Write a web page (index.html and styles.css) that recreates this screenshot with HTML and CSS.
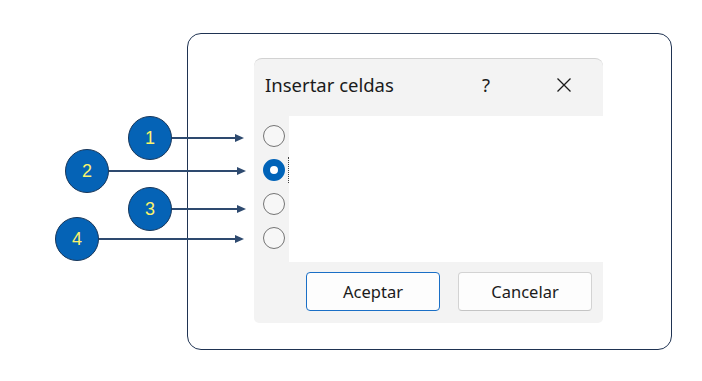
FILE: index.html
```html
<!DOCTYPE html>
<html lang="es">
<head>
	<meta charset="UTF-8">
	<title>Insertar celdas</title>
	<link rel="stylesheet" href="styles.css">
</head>
<body>
	<div class="stage">
		<div class="frame">
			<div class="dialog" role="dialog" aria-label="Insertar celdas">
				<div class="dialog-head">
					<span class="title">Insertar celdas</span>
					<span class="help">?</span>
					<svg class="close" viewBox="0 0 16 16" aria-hidden="true">
						<path d="M1.5 1.5 L14.5 14.5 M14.5 1.5 L1.5 14.5" />
					</svg>
				</div>
				<div class="dialog-body">
					<div class="options">
						<span class="radio"></span>
						<span class="radio checked"></span>
						<span class="radio"></span>
						<span class="radio"></span>
					</div>
					<div class="content">
						<span class="focus"></span>
					</div>
				</div>
				<div class="dialog-foot">
					<button class="btn primary">Aceptar</button>
					<button class="btn">Cancelar</button>
				</div>
			</div>
		</div>

		<!-- Annotation layer -->
		<svg class="arrows" viewBox="0 0 702 381" aria-hidden="true">
			<path d="M172 138 H236 M109 171 H238 M172 209 H238 M99 239 H236" />
			<polygon points="235,134 244,138 235,142" />
			<polygon points="237,167 246,171 237,175" />
			<polygon points="237,205 246,209 237,213" />
			<polygon points="235,235 244,239 235,243" />
		</svg>
		<span class="badge badge-1">1</span>
		<span class="badge badge-2">2</span>
		<span class="badge badge-3">3</span>
		<span class="badge badge-4">4</span>
	</div>
</body>
</html>
```

FILE: styles.css
```css
/* Base */
:root {
	--color-navy: #1f3352;
	--color-arrow: #2e4a6f;
	--color-dialog: #f3f3f3;
	--color-accent: #0063b8;
	--color-badge: #0563b6;
	--color-badge-text: #fbf36c;
	--font-ui: "Noto Sans", "Open Sans", sans-serif;
}

* {
	box-sizing: border-box;
}

body {
	margin: 0;
	background: #fff;
	font-family: var(--font-ui);
	color: #1b1b1b;
}

.stage {
	position: relative;
	width: 702px;
	height: 381px;
	padding: 33px 0 0 187px;
}

/* Outer frame */
.frame {
	width: 485px;
	height: 317px;
	border: 1.5px solid var(--color-navy);
	border-radius: 14px;
	padding: 24px 0 0 66px;
}

/* Dialog */
.dialog {
	width: 349px;
	height: 265px;
	background: var(--color-dialog);
	border-top: 1px solid #d2d2d2;
	border-radius: 8px 8px 5px 5px;
	display: flex;
	flex-direction: column;
}

.dialog-head {
	height: 57px;
	display: flex;
	align-items: flex-start;
	padding: 13px 0 0 11px;
	font-size: 18.5px;
	line-height: 26px;
}

.title {
	flex: 1;
}

.help {
	width: 20px;
	text-align: center;
	margin-right: 60px;
}

.close {
	width: 16px;
	height: 16px;
	margin: 5px 31px 0 0;
	fill: none;
	stroke: #1b1b1b;
	stroke-width: 1.3;
}

.dialog-body {
	height: 146px;
	display: flex;
}

.options {
	width: 35px;
	display: flex;
	flex-direction: column;
	gap: 12px;
	padding: 9px 0 0 9px;
}

.radio {
	display: block;
	width: 22px;
	height: 22px;
	border-radius: 50%;
	border: 1.5px solid #747474;
	background: #f7f7f7;
}

.radio.checked {
	border: 7px solid var(--color-accent);
	background: #fff;
}

.content {
	flex: 1;
	background: #fff;
	display: flex;
	flex-direction: column;
}

.focus {
	display: block;
	width: 0;
	height: 26px;
	margin: 41px 0 0 -1px;
	border-left: 1px dotted #444;
}

.dialog-foot {
	flex: 1;
	display: flex;
	justify-content: flex-end;
	gap: 18px;
	padding: 10px 11px 0 0;
}

.btn {
	width: 134px;
	height: 39px;
	border: 1px solid #d3d3d3;
	border-bottom-color: #c4c4c4;
	border-radius: 4px;
	background: #fdfdfd;
	font-family: var(--font-ui);
	font-size: 16.5px;
	color: #1b1b1b;
	padding: 0;
}

.btn.primary {
	border: 1.5px solid #1a6fc6;
}

/* Annotations */
.arrows {
	position: absolute;
	left: 0;
	top: 0;
	width: 702px;
	height: 381px;
	pointer-events: none;
}

.arrows path {
	fill: none;
	stroke: var(--color-arrow);
	stroke-width: 2;
}

.arrows polygon {
	fill: var(--color-arrow);
}

.badge {
	position: absolute;
	width: 44px;
	height: 44px;
	border-radius: 50%;
	background: var(--color-badge);
	border: 1px solid #17365a;
	color: var(--color-badge-text);
	font-family: "Liberation Sans", sans-serif;
	font-size: 18px;
	display: flex;
	align-items: center;
	justify-content: center;
}

.badge-1 { left: 128px; top: 116px; }
.badge-2 { left: 65px; top: 149px; }
.badge-3 { left: 128px; top: 187px; }
.badge-4 { left: 55px; top: 217px; }
```
